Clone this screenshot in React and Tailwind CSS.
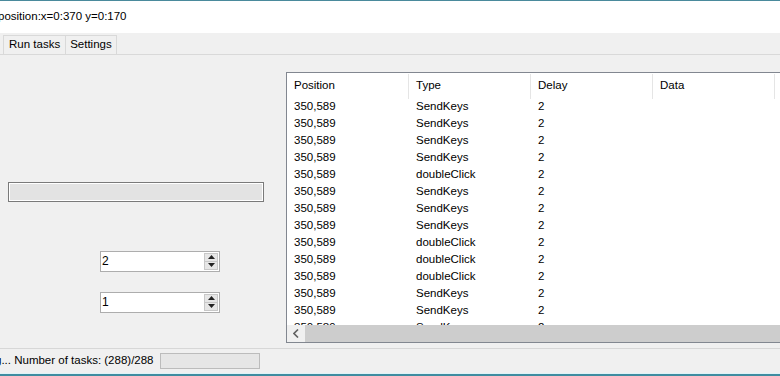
import React from "react";

const rows = [
  "SendKeys","SendKeys","SendKeys","SendKeys","doubleClick","SendKeys","SendKeys","SendKeys",
  "doubleClick","doubleClick","doubleClick","SendKeys","SendKeys","SendKeys",
];

function Spin({ value }) {
  return (
    <div className="flex h-[21px] w-[120px] items-center border border-[#adadad] bg-white">
      <span className="flex-1 pl-[1px] text-[12px] leading-none text-black">{value}</span>
      <div className="mr-[1px] flex h-[17px] w-[14px] flex-col border border-[#c8c8c8] bg-[#e6e6e6]">
        <div className="flex flex-1 items-center justify-center border-b border-[#c8c8c8]">
          <svg width="7" height="4" viewBox="0 0 7 4"><path d="M0 4 L3.5 0 L7 4 Z" fill="#222" /></svg>
        </div>
        <div className="flex flex-1 items-center justify-center">
          <svg width="7" height="4" viewBox="0 0 7 4"><path d="M0 0 L3.5 4 L7 0 Z" fill="#222" /></svg>
        </div>
      </div>
    </div>
  );
}

export default function App() {
  const font = { fontFamily: '"Liberation Sans", Arial, sans-serif' };
  return (
    <div className="flex h-[376px] w-[780px] flex-col overflow-hidden bg-[#f0f0f0] text-[11.5px] text-black" style={font}>
      <div className="h-[1px] bg-[#4a8a9c]" />
      <div className="flex h-[32px] items-center bg-white">
        <span className="ml-[-2px] text-[11.5px]">position:x=0:370 y=0:170</span>
      </div>
      <div className="flex h-[22px] items-end border-b border-[#d9d9d9] pl-[3px]">
        <div className="flex h-[19px] items-center border-l border-t border-r border-[#d9d9d9] px-[5px]">Run tasks</div>
        <div className="flex h-[19px] items-center border-t border-r border-[#d9d9d9] px-[4px]">Settings</div>
      </div>
      <div className="flex h-[292px]">
        <div className="flex w-[286px] shrink-0 flex-col pl-[8px] pt-[127px]">
          <div className="h-[20px] w-[256px] border border-[#7a7a7a] bg-[#e3e3e3] shadow-[inset_0_0_0_1px_#ffffff]" />
          <div className="ml-[92px] mt-[49px]"><Spin value="2" /></div>
          <div className="ml-[92px] mt-[20px]"><Spin value="1" /></div>
        </div>
        <div className="mt-[17px] flex h-[271px] w-[510px] shrink-0 flex-col border border-[#828790] bg-white">
          <div className="flex h-[26px] shrink-0 items-center pt-[1px]">
            {["Position", "Type", "Delay", "Data", ""].map((h, i) => (
              <div key={i} className="flex h-full w-[122px] shrink-0 items-center border-r border-[#e5e5e5] pl-[7px]">{h}</div>
            ))}
          </div>
          <div className="relative flex-1 overflow-hidden">
            {rows.map((t, i) => (
              <div key={i} className="flex h-[17px] items-center">
                <div className="w-[122px] shrink-0 pl-[7px]">350,589</div>
                <div className="w-[122px] shrink-0 pl-[7px]">{t}</div>
                <div className="w-[122px] shrink-0 pl-[7px]">2</div>
              </div>
            ))}
            <div className="absolute bottom-0 left-0 right-0 flex h-[17px] items-center bg-[#f0f0f0]">
              <div className="flex h-full w-[18px] items-center justify-center">
                <svg width="6" height="9" viewBox="0 0 6 9"><path d="M5 0.5 L1 4.5 L5 8.5" stroke="#606060" strokeWidth="1.6" fill="none" /></svg>
              </div>
              <div className="h-full flex-1 bg-[#cdcdcd]" />
            </div>
          </div>
        </div>
      </div>
      <div className="h-[4px]" />
      <div className="flex h-[25px] items-center border-t border-[#d7d7d7]">
        <span className="ml-[-5px]">g... Number of tasks: (288)/288</span>
        <div className="ml-[6px] h-[16px] w-[100px] border border-[#bcbcbc] bg-[#e6e6e6]" />
      </div>
      <div className="h-[1px] bg-[#dff3f7]" />
      <div className="h-[2px] bg-[#3f8ca0]" />
    </div>
  );
}
